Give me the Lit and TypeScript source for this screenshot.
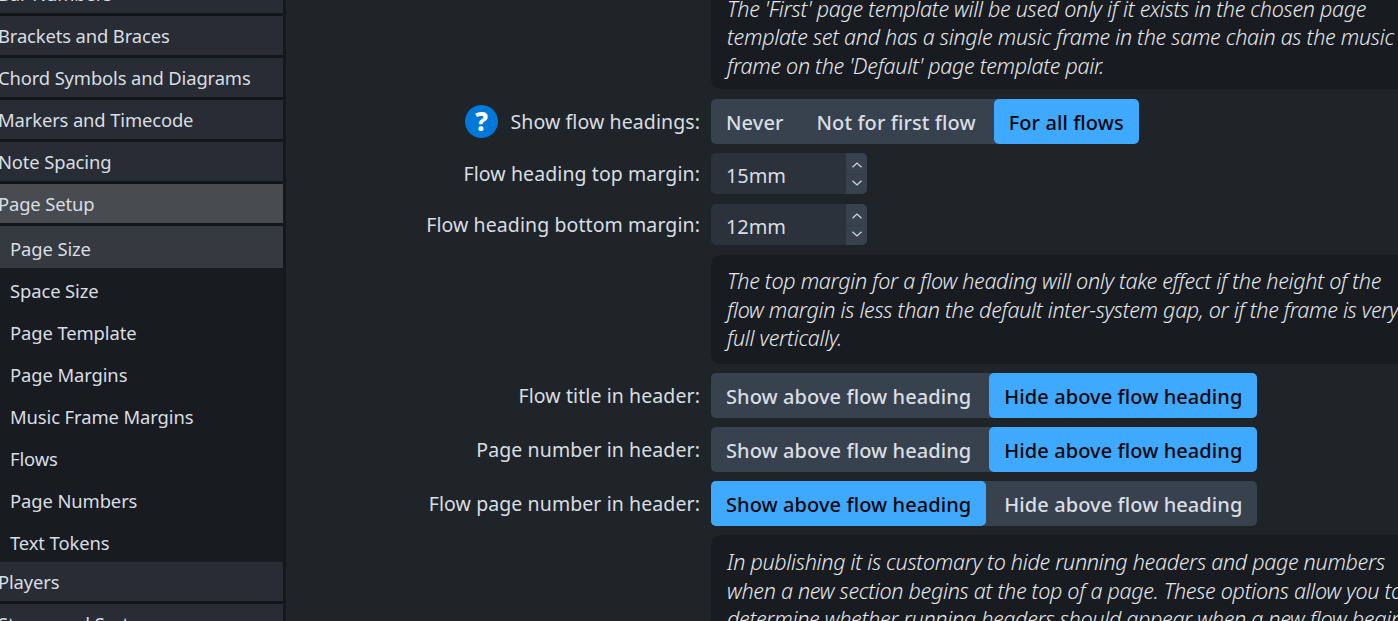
import { LitElement, html, css } from "lit";
import { customElement } from "lit/decorators.js";

const top = ["Bar Numbers", "Brackets and Braces", "Chord Symbols and Diagrams", "Markers and Timecode", "Note Spacing"];
const subs = ["Space Size", "Page Template", "Page Margins", "Music Frame Margins", "Flows", "Page Numbers", "Text Tokens"];

const chevUp = html`<svg width="12" height="8" viewBox="0 0 12 8"><path d="M1.5 6.2 L6 2 L10.5 6.2" fill="none" stroke="#d5d9de" stroke-width="1.2"/></svg>`;
const chevDown = html`<svg width="12" height="8" viewBox="0 0 12 8"><path d="M1.5 1.8 L6 6 L10.5 1.8" fill="none" stroke="#d5d9de" stroke-width="1.2"/></svg>`;
const spinBtns = html`<div class="b"><div class="up">${chevUp}</div><div class="down">${chevDown}</div></div>`;

@customElement("app-root")
export class AppRoot extends LitElement {
  static styles = css`
    :host {
      display: flex;
      width: 1398px;
      height: 621px;
      overflow: hidden;
      background: #1f2429;
      font-family: "Noto Sans", "Open Sans", sans-serif;
      font-size: 18.4px;
      color: #d9dee3;
    }
    .side {
      width: 283px;
      flex: none;
      height: 621px;
      overflow: hidden;
      background: #14161a;
      border-right: 3px solid #16181b;
      box-sizing: content-box;
    }
    .list { margin-top: -26px; display: flex; flex-direction: column; }
    .item {
      height: 39px;
      line-height: 39px;
      margin-bottom: 3px;
      background: #282c34;
      white-space: nowrap;
      text-indent: -2px;
      letter-spacing: -0.13px;
    }
    .item.open { background: #484c50; }
    .sub {
      height: 42px;
      line-height: 46px;
      padding-left: 10px;
      white-space: nowrap;
      letter-spacing: -0.1px;
      background: #181b20;
    }
    .sub.cur { background: #353940; }
    .main { flex: 1; min-width: 0; overflow: hidden; }
    .content { margin-top: -26px; width: 1200px; display: flex; flex-direction: column; padding-left: 425px; box-sizing: border-box; }
    .note {
      background: #181b20;
      border-radius: 10px;
      padding: 12px 15px 9px 16px;
      font-style: italic;
      font-weight: 300;
      line-height: 28.5px;
      font-size: 21.5px;
      letter-spacing: -0.29px;
      white-space: nowrap;
      color: #e4e8ec;
      width: 720px;
      box-sizing: border-box;
    }
    .note.first { height: 115px; padding-top: 20.5px; }
    .note.second { height: 109px; }
    .note.third { padding-top: 13px; }
    .row { display: flex; align-items: center; }
    .gap9 { margin-top: 9px; }
    .gap10 { margin-top: 10px; }
    .label {
      position: relative;
      width: 300px;
      margin-left: -300px;
      padding-right: 11px;
      box-sizing: border-box;
      text-align: right;
      white-space: nowrap;
      font-size: 19.5px;
      letter-spacing: 0.09px;
      flex: none;
    }
    .help {
      position: absolute;
      left: 54px;
      top: 50%;
      margin-top: -17px;
      width: 33px;
      height: 33px;
      border-radius: 50%;
      background: #0078d7;
      color: #fff;
      font-weight: 800;
      font-size: 26px;
      line-height: 33px;
      text-align: center;
      letter-spacing: 0;
    }
    .seg { display: flex; gap: 3px; height: 45px; background: #38414e; border-radius: 5px; }
    .seg div {
      padding: 0 15px;
      line-height: 47px;
      font-size: 20px;
      font-weight: 500;
      letter-spacing: 0.08px;
      white-space: nowrap;
      border-radius: 5px;
    }
    .seg .on { background: #3fa9ff; color: #04070a; }
    .spin {
      display: flex;
      width: 156px;
      height: 41px;
      background: #2b323c;
      border-radius: 5px;
      overflow: hidden;
    }
    .spin .v { flex: 1; line-height: 46px; padding-left: 15px; font-size: 20px; letter-spacing: -0.1px; }
    .spin .b { width: 21px; background: #38414e; display: flex; flex-direction: column; }
    .b div { flex: 1; display: flex; justify-content: center; }
    .b svg { display: block; }
    .b .up { align-items: flex-end; padding-bottom: 5px; }
    .b .down { align-items: flex-start; padding-top: 4px; border-top: 1px solid #333b47; }
  `;

  render() {
    return html`
      <nav class="side">
        <div class="list">
          ${top.map((t) => html`<div class="item">${t}</div>`)}
          <div class="item open">Page Setup</div>
          <div class="sub cur">Page Size</div>
          ${subs.map((t) => html`<div class="sub">${t}</div>`)}
          <div class="item">Players</div>
          <div class="item">Staves and Systems</div>
        </div>
      </nav>
      <main class="main">
        <div class="content">
          <div class="note first">The 'First' page template will be used only if it exists in the chosen page<br />template set and has a single music frame in the same chain as the music<br />frame on the 'Default' page template pair.</div>
          <div class="row gap10">
            <div class="label"><span class="help">?</span>Show flow headings:</div>
            <div class="seg"><div>Never</div><div>Not for first flow</div><div class="on">For all flows</div></div>
          </div>
          <div class="row gap9">
            <div class="label">Flow heading top margin:</div>
            <div class="spin"><div class="v">15mm</div>${spinBtns}</div>
          </div>
          <div class="row gap10">
            <div class="label">Flow heading bottom margin:</div>
            <div class="spin"><div class="v">12mm</div>${spinBtns}</div>
          </div>
          <div class="note second gap10">The top margin for a flow heading will only take effect if the height of the<br />flow margin is less than the default inter-system gap, or if the frame is very<br />full vertically.</div>
          <div class="row gap9">
            <div class="label">Flow title in header:</div>
            <div class="seg"><div>Show above flow heading</div><div class="on">Hide above flow heading</div></div>
          </div>
          <div class="row gap9">
            <div class="label">Page number in header:</div>
            <div class="seg"><div>Show above flow heading</div><div class="on">Hide above flow heading</div></div>
          </div>
          <div class="row gap9">
            <div class="label">Flow page number in header:</div>
            <div class="seg"><div class="on">Show above flow heading</div><div>Hide above flow heading</div></div>
          </div>
          <div class="note third gap9">In publishing it is customary to hide running headers and page numbers<br />when a new section begins at the top of a page. These options allow you to<br />determine whether running headers should appear when a new flow begins</div>
        </div>
      </main>
    `;
  }
}
